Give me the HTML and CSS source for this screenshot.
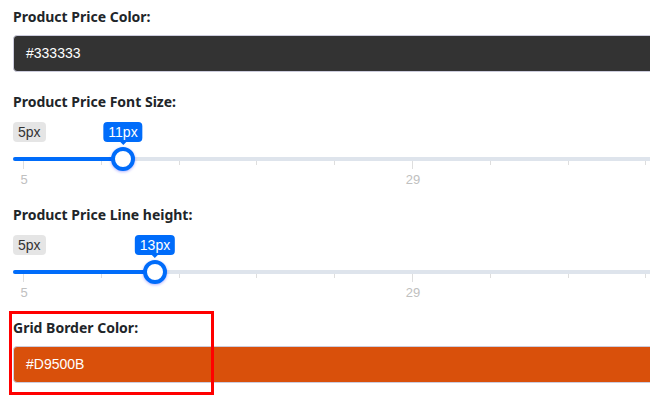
FILE: index.html
```html
<!DOCTYPE html>
<html lang="en">
<head>
    <meta charset="UTF-8">
    <meta name="viewport" content="width=device-width, initial-scale=1.0">
    <title>Price Settings</title>
    <link rel="stylesheet" href="styles.css">
</head>
<body>
    <div class="panel">
        <div class="field">
            <label class="field-label">Product Price Color:</label>
            <div class="color-input dark">#333333</div>
        </div>

        <div class="field">
            <label class="field-label">Product Price Font Size:</label>
            <div class="range">
                <div class="range-top">
                    <span class="range-min">5px</span>
                    <span class="range-tip" style="left: 110px">11px</span>
                </div>
                <div class="range-line">
                    <div class="range-bar" style="width: 110px"></div>
                    <span class="range-handle" style="left: 110px"></span>
                </div>
                <div class="range-grid">
                    <div class="cell"><span class="tick big"></span><span class="num">5</span></div>
                    <div class="cell"><span class="tick"></span></div>
                    <div class="cell"><span class="tick"></span></div>
                    <div class="cell"><span class="tick"></span></div>
                    <div class="cell"><span class="tick"></span></div>
                    <div class="cell"><span class="tick big"></span><span class="num">29</span></div>
                    <div class="cell"><span class="tick"></span></div>
                    <div class="cell"><span class="tick"></span></div>
                    <div class="cell"><span class="tick"></span></div>
                    <div class="cell"><span class="tick"></span></div>
                </div>
            </div>
        </div>

        <div class="field">
            <label class="field-label">Product Price Line height:</label>
            <div class="range">
                <div class="range-top">
                    <span class="range-min">5px</span>
                    <span class="range-tip" style="left: 142px">13px</span>
                </div>
                <div class="range-line">
                    <div class="range-bar" style="width: 142px"></div>
                    <span class="range-handle" style="left: 142px"></span>
                </div>
                <div class="range-grid">
                    <div class="cell"><span class="tick big"></span><span class="num">5</span></div>
                    <div class="cell"><span class="tick"></span></div>
                    <div class="cell"><span class="tick"></span></div>
                    <div class="cell"><span class="tick"></span></div>
                    <div class="cell"><span class="tick"></span></div>
                    <div class="cell"><span class="tick big"></span><span class="num">29</span></div>
                    <div class="cell"><span class="tick"></span></div>
                    <div class="cell"><span class="tick"></span></div>
                    <div class="cell"><span class="tick"></span></div>
                    <div class="cell"><span class="tick"></span></div>
                </div>
            </div>
        </div>

        <div class="field marked">
            <label class="field-label">Grid Border Color:</label>
            <div class="color-input orange">#D9500B</div>
            <div class="highlight"></div>
        </div>
    </div>
</body>
</html>
```

FILE: styles.css
```css
body {
    margin: 0;
    background: #fff;
    overflow: hidden;
    font-family: "Liberation Sans", Arial, sans-serif;
}
.panel {
    width: 803px;
    padding: 7px 0 0 13px;
}
.field {
    margin-bottom: 20px;
}
.field-label {
    display: block;
    font-family: "Noto Sans", sans-serif;
    font-weight: 700;
    font-size: 14px;
    line-height: 20px;
    color: #212529;
    margin-bottom: 8px;
}
.color-input {
    box-sizing: border-box;
    height: 37px;
    border: 1px solid #ccd;
    border-radius: 4px;
    padding: 0 12px;
    font-size: 14px;
    line-height: 35px;
    color: #fff;
}
.dark {
    background: #333333;
}
.orange {
    background: #D9500B;
}

/* range slider */
.range {
    padding-top: 2px;
}
.range-top {
    position: relative;
    height: 20px;
}
.range-min {
    display: inline-block;
    padding: 3px 5px;
    font-size: 14px;
    line-height: 14px;
    color: #333;
    background: rgba(0,0,0,0.1);
    border-radius: 4px;
}
.range-tip {
    position: absolute;
    top: 0;
    transform: translateX(-50%);
    padding: 3px 5px;
    font-size: 14px;
    line-height: 14px;
    color: #fff;
    background: #006cfa;
    border-radius: 4px;
}
.range-tip::before {
    content: "";
    position: absolute;
    left: 50%;
    bottom: -6px;
    margin-left: -3px;
    border: 3px solid transparent;
    border-top-color: #006cfa;
}
.range-line {
    position: relative;
    height: 4px;
    margin-top: 15px;
    background: #dee4ec;
    border-radius: 4px;
}
.range-bar {
    height: 4px;
    background: #006cfa;
    border-radius: 4px 0 0 4px;
}
.range-handle {
    position: absolute;
    top: -10px;
    width: 24px;
    height: 24px;
    box-sizing: border-box;
    margin-left: -12px;
    border: 4px solid #006cfa;
    border-radius: 50%;
    background: #fff;
    box-shadow: 0 1px 3px rgba(0,0,255,0.3);
}
.range-grid {
    display: grid;
    grid-template-columns: repeat(10, 77.8px);
    padding-left: 10px;
    height: 24px;
}
.cell {
    display: flex;
    flex-direction: column;
    align-items: flex-start;
}
.tick {
    width: 1px;
    height: 4px;
    background: #dedede;
}
.tick.big {
    height: 8px;
}
.num {
    display: inline-block;
    transform: translateX(-50%);
    margin-left: 1px;
    margin-top: 4px;
    font-size: 13px;
    line-height: 14px;
    color: silver;
}

.marked {
    position: relative;
}
.highlight {
    position: absolute;
    left: -4px;
    top: -7px;
    width: 199px;
    height: 78px;
    border: 3px solid #ff0000;
}
```
